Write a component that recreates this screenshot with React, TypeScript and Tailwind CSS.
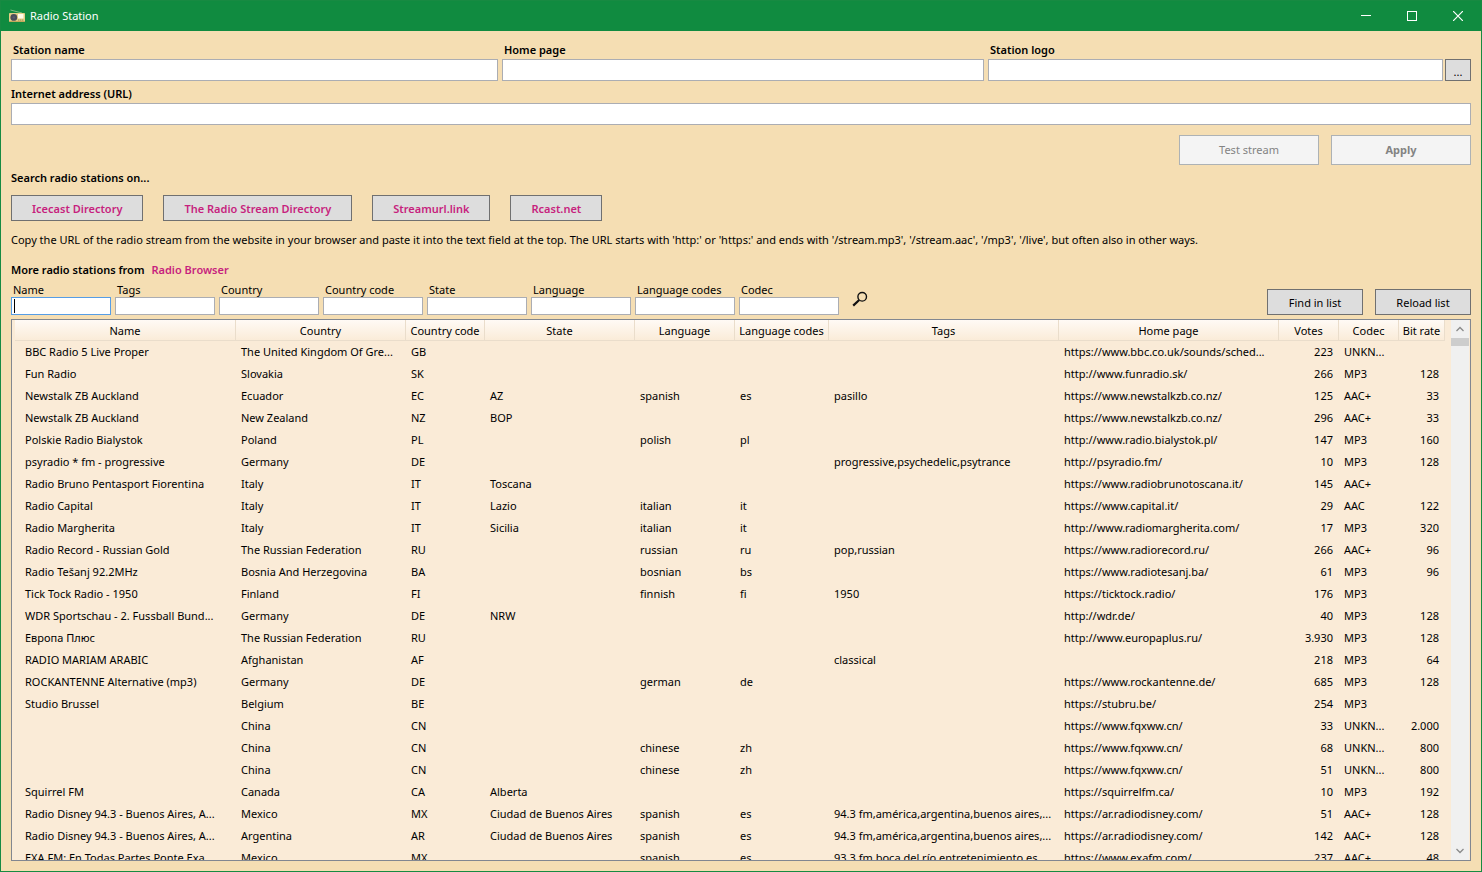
import React from 'react';

type Station = {
  name: string;
  country: string;
  code: string;
  state?: string;
  language?: string;
  langCode?: string;
  tags?: string;
  homePage?: string;
  votes: string;
  codec: string;
  bitRate?: string;
};

const stations: Station[] = [
  { name: 'BBC Radio 5 Live Proper', country: 'The United Kingdom Of Gre...', code: 'GB', homePage: 'https://www.bbc.co.uk/sounds/sched...', votes: '223', codec: 'UNKN...' },
  { name: 'Fun Radio', country: 'Slovakia', code: 'SK', homePage: 'http://www.funradio.sk/', votes: '266', codec: 'MP3', bitRate: '128' },
  { name: 'Newstalk ZB Auckland', country: 'Ecuador', code: 'EC', state: 'AZ', language: 'spanish', langCode: 'es', tags: 'pasillo', homePage: 'https://www.newstalkzb.co.nz/', votes: '125', codec: 'AAC+', bitRate: '33' },
  { name: 'Newstalk ZB Auckland', country: 'New Zealand', code: 'NZ', state: 'BOP', homePage: 'https://www.newstalkzb.co.nz/', votes: '296', codec: 'AAC+', bitRate: '33' },
  { name: 'Polskie Radio Bialystok', country: 'Poland', code: 'PL', language: 'polish', langCode: 'pl', homePage: 'http://www.radio.bialystok.pl/', votes: '147', codec: 'MP3', bitRate: '160' },
  { name: 'psyradio * fm - progressive', country: 'Germany', code: 'DE', tags: 'progressive,psychedelic,psytrance', homePage: 'http://psyradio.fm/', votes: '10', codec: 'MP3', bitRate: '128' },
  { name: 'Radio Bruno Pentasport Fiorentina', country: 'Italy', code: 'IT', state: 'Toscana', homePage: 'https://www.radiobrunotoscana.it/', votes: '145', codec: 'AAC+' },
  { name: 'Radio Capital', country: 'Italy', code: 'IT', state: 'Lazio', language: 'italian', langCode: 'it', homePage: 'https://www.capital.it/', votes: '29', codec: 'AAC', bitRate: '122' },
  { name: 'Radio Margherita', country: 'Italy', code: 'IT', state: 'Sicilia', language: 'italian', langCode: 'it', homePage: 'http://www.radiomargherita.com/', votes: '17', codec: 'MP3', bitRate: '320' },
  { name: 'Radio Record - Russian Gold', country: 'The Russian Federation', code: 'RU', language: 'russian', langCode: 'ru', tags: 'pop,russian', homePage: 'https://www.radiorecord.ru/', votes: '266', codec: 'AAC+', bitRate: '96' },
  { name: 'Radio Tešanj 92.2MHz', country: 'Bosnia And Herzegovina', code: 'BA', language: 'bosnian', langCode: 'bs', homePage: 'https://www.radiotesanj.ba/', votes: '61', codec: 'MP3', bitRate: '96' },
  { name: 'Tick Tock Radio - 1950', country: 'Finland', code: 'FI', language: 'finnish', langCode: 'fi', tags: '1950', homePage: 'https://ticktock.radio/', votes: '176', codec: 'MP3' },
  { name: 'WDR Sportschau - 2. Fussball Bund...', country: 'Germany', code: 'DE', state: 'NRW', homePage: 'http://wdr.de/', votes: '40', codec: 'MP3', bitRate: '128' },
  { name: 'Европа Плюс', country: 'The Russian Federation', code: 'RU', homePage: 'http://www.europaplus.ru/', votes: '3.930', codec: 'MP3', bitRate: '128' },
  { name: 'RADIO MARIAM ARABIC', country: 'Afghanistan', code: 'AF', tags: 'classical', votes: '218', codec: 'MP3', bitRate: '64' },
  { name: 'ROCKANTENNE Alternative (mp3)', country: 'Germany', code: 'DE', language: 'german', langCode: 'de', homePage: 'https://www.rockantenne.de/', votes: '685', codec: 'MP3', bitRate: '128' },
  { name: 'Studio Brussel', country: 'Belgium', code: 'BE', homePage: 'https://stubru.be/', votes: '254', codec: 'MP3' },
  { name: '', country: 'China', code: 'CN', homePage: 'https://www.fqxww.cn/', votes: '33', codec: 'UNKN...', bitRate: '2.000' },
  { name: '', country: 'China', code: 'CN', language: 'chinese', langCode: 'zh', homePage: 'https://www.fqxww.cn/', votes: '68', codec: 'UNKN...', bitRate: '800' },
  { name: '', country: 'China', code: 'CN', language: 'chinese', langCode: 'zh', homePage: 'https://www.fqxww.cn/', votes: '51', codec: 'UNKN...', bitRate: '800' },
  { name: 'Squirrel FM', country: 'Canada', code: 'CA', state: 'Alberta', homePage: 'https://squirrelfm.ca/', votes: '10', codec: 'MP3', bitRate: '192' },
  { name: 'Radio Disney 94.3 - Buenos Aires, A...', country: 'Mexico', code: 'MX', state: 'Ciudad de Buenos Aires', language: 'spanish', langCode: 'es', tags: '94.3 fm,américa,argentina,buenos aires,...', homePage: 'https://ar.radiodisney.com/', votes: '51', codec: 'AAC+', bitRate: '128' },
  { name: 'Radio Disney 94.3 - Buenos Aires, A...', country: 'Argentina', code: 'AR', state: 'Ciudad de Buenos Aires', language: 'spanish', langCode: 'es', tags: '94.3 fm,américa,argentina,buenos aires,...', homePage: 'https://ar.radiodisney.com/', votes: '142', codec: 'AAC+', bitRate: '128' },
  { name: 'EXA FM: En Todas Partes Ponte Exa', country: 'Mexico', code: 'MX', language: 'spanish', langCode: 'es', tags: '93.3 fm,boca del río,entretenimiento,es', homePage: 'https://www.exafm.com/', votes: '237', codec: 'AAC+', bitRate: '48' },
];

const columns: { key: keyof Station; label: string; width: string; cell: string }[] = [
  { key: 'name', label: 'Name', width: 'w-[221px]', cell: 'pl-[10px]' },
  { key: 'country', label: 'Country', width: 'w-[170px]', cell: 'pl-[5px]' },
  { key: 'code', label: 'Country code', width: 'w-[79px]', cell: 'pl-[5px]' },
  { key: 'state', label: 'State', width: 'w-[150px]', cell: 'pl-[5px]' },
  { key: 'language', label: 'Language', width: 'w-[100px]', cell: 'pl-[5px]' },
  { key: 'langCode', label: 'Language codes', width: 'w-[94px]', cell: 'pl-[5px]' },
  { key: 'tags', label: 'Tags', width: 'w-[230px]', cell: 'pl-[5px]' },
  { key: 'homePage', label: 'Home page', width: 'w-[220px]', cell: 'pl-[5px]' },
  { key: 'votes', label: 'Votes', width: 'w-[60px]', cell: 'pr-[6px] text-right' },
  { key: 'codec', label: 'Codec', width: 'w-[60px]', cell: 'pl-[5px]' },
  { key: 'bitRate', label: 'Bit rate', width: 'w-[46px]', cell: 'pr-[6px] text-right' },
];

const directories = ['Icecast Directory', 'The Radio Stream Directory', 'Streamurl.link', 'Rcast.net'];

const filters = ['Name', 'Tags', 'Country', 'Country code', 'State', 'Language', 'Language codes', 'Codec'];

const RadioIcon = () => (
  <svg viewBox="0 0 16 14" className="h-[14px] w-4" aria-hidden>
    <path d="M1.5 1 L13 4" stroke="#8fc08a" strokeWidth="0.9" fill="none" />
    <rect x="0" y="4" width="16" height="9" rx="0.8" fill="#e3cf86" />
    <rect x="0" y="12" width="16" height="1" fill="#c3a95c" />
    <circle cx="4.8" cy="8.4" r="3.4" fill="#4b4d5a" />
    <circle cx="4.8" cy="8.4" r="1.2" fill="#5c5e6c" />
    <rect x="9" y="5" width="5.5" height="4.5" fill="#fffbe8" />
    <circle cx="9.8" cy="11" r="0.6" fill="#7a6a3a" />
    <circle cx="11.8" cy="11" r="0.6" fill="#7a6a3a" />
    <circle cx="13.8" cy="11" r="0.6" fill="#7a6a3a" />
  </svg>
);

const TitleBar = () => (
  <header className="flex h-[30px] shrink-0 items-center bg-[#108b40] pl-2 text-white">
    <RadioIcon />
    <h1 className="ml-[5px] flex-1">Radio Station</h1>
    <button type="button" aria-label="Minimize" className="flex h-full w-[46px] items-center justify-center">
      <svg viewBox="0 0 10 10" className="h-[10px] w-[10px]" aria-hidden>
        <path d="M0 4.5 H10" stroke="currentColor" />
      </svg>
    </button>
    <button type="button" aria-label="Maximize" className="flex h-full w-[46px] items-center justify-center">
      <svg viewBox="0 0 10 10" className="h-[10px] w-[10px]" aria-hidden>
        <rect x="0.5" y="0.5" width="9" height="9" fill="none" stroke="currentColor" />
      </svg>
    </button>
    <button type="button" aria-label="Close" className="flex h-full w-[46px] items-center justify-center">
      <svg viewBox="0 0 10 10" className="h-[10px] w-[10px]" aria-hidden>
        <path d="M0 0 L10 10 M10 0 L0 10" stroke="currentColor" strokeWidth="1.2" />
      </svg>
    </button>
  </header>
);

const textBox = 'h-[22px] w-full min-w-0 border border-[#abadb3] bg-white px-1 outline-none';
const button = 'border border-[#707070] bg-[#dddddd]';

const App: React.FC = () => {
  return (
    <div className="flex h-screen flex-col overflow-hidden border border-[#178a42] bg-[#f5deb3] font-['Noto_Sans','Open_Sans',sans-serif] text-[11px] leading-4 text-black">
      <TitleBar />

      <main className="flex min-h-0 flex-1 flex-col px-[10px] pt-[11px] pb-[10px]">
        <div className="grid grid-cols-[487fr_482fr_483fr] gap-1 font-semibold">
          <div>
            <label htmlFor="station-name" className="mb-px block pl-[2px]">Station name</label>
            <input id="station-name" className={textBox} />
          </div>
          <div>
            <label htmlFor="home-page" className="mb-px block pl-[2px]">Home page</label>
            <input id="home-page" className={textBox} />
          </div>
          <div>
            <label htmlFor="station-logo" className="mb-px block pl-[2px]">Station logo</label>
            <div className="flex gap-[2px]">
              <input id="station-logo" className={textBox} />
              <button type="button" aria-label="Browse" className={`${button} h-[22px] w-[26px] shrink-0 pt-1 font-normal`}>...</button>
            </div>
          </div>
        </div>

        <label htmlFor="stream-url" className="mt-[5px] mb-px font-semibold">Internet address (URL)</label>
        <input id="stream-url" className={`${textBox} shrink-0`} />

        <div className="mt-[10px] flex justify-end gap-3">
          <button type="button" disabled className="h-[30px] w-[140px] border border-[#adb2b5] bg-[#f4f4f4] text-[#838383]">Test stream</button>
          <button type="button" disabled className="h-[30px] w-[140px] border border-[#adb2b5] bg-[#f4f4f4] font-bold text-[#838383]">Apply</button>
        </div>

        <h2 className="mt-[5px] font-semibold">Search radio stations on...</h2>
        <div className="mt-[9px] flex gap-5">
          {directories.map((name) => (
            <button key={name} type="button" className={`${button} h-[26px] px-5 pt-px font-semibold text-[#c71f7e]`}>
              {name}
            </button>
          ))}
        </div>

        <p className="mt-[11px] whitespace-nowrap">
          Copy the URL of the radio stream from the website in your browser and paste it into the text field at the top. The URL starts with 'http:' or 'https:' and ends with '/stream.mp3', '/stream.aac', '/mp3', '/live', but often also in other ways.
        </p>

        <p className="mt-[14px] font-semibold">
          More radio stations from
          <a href="#radio-browser" className="ml-[7px] text-[#c71f7e]">Radio Browser</a>
        </p>

        <div className="mt-1 flex items-end">
          <div className="flex gap-1">
            {filters.map((name, i) => (
              <div key={name} className="relative w-[100px]">
                <label htmlFor={`filter-${i}`} className="block pl-[2px] leading-[15px]">{name}</label>
                <input
                  id={`filter-${i}`}
                  className={`block h-[18px] w-full border bg-white px-1 caret-transparent outline-none ${i === 0 ? 'border-[#569de5]' : 'border-[#abadb3]'}`}
                />
                {i === 0 && <span className="absolute bottom-[2px] left-[3px] h-[14px] w-px bg-black" />}
              </div>
            ))}
          </div>
          <button type="button" aria-label="Search" className="mb-2 ml-[13px]">
            <svg viewBox="0 0 16 16" className="h-4 w-4" fill="none" stroke="#111" aria-hidden>
              <circle cx="10.2" cy="5.8" r="4.3" strokeWidth="1.4" />
              <path d="M7.2 9 L1.2 14.6" strokeWidth="2.2" />
            </svg>
          </button>
          <div className="ml-auto flex gap-3">
            <button type="button" className={`${button} h-[26px] w-24 pt-px`}>Find in list</button>
            <button type="button" className={`${button} h-[26px] w-24 pt-px`}>Reload list</button>
          </div>
        </div>

        <section className="mt-1 flex min-h-0 flex-1 border border-[#828790] bg-[#faebd7]">
          <div className="min-w-0 flex-1 overflow-hidden pl-[3px]">
            <table className="w-[1430px] table-fixed border-separate border-spacing-0">
              <colgroup>
                {columns.map((col) => <col key={col.key} className={col.width} />)}
              </colgroup>
              <thead>
                <tr className="h-[21px] bg-linear-to-b from-[#fffaf5] to-[#faebd7]">
                  {columns.map((col) => (
                    <th key={col.key} className="border-r border-b border-[#eaddcb] p-0 pt-[2px] text-center font-normal whitespace-nowrap">{col.label}</th>
                  ))}
                </tr>
              </thead>
              <tbody>
                {stations.map((s, i) => (
                  <tr key={i} className="h-[22px]">
                    {columns.map((col) => (
                      <td key={col.key} className={`py-0 whitespace-nowrap ${col.cell}`}>{s[col.key]}</td>
                    ))}
                  </tr>
                ))}
              </tbody>
            </table>
          </div>
          <div className="mr-px flex w-[18px] shrink-0 flex-col bg-[#f0f0f0]">
            <button type="button" aria-label="Scroll up" className="flex h-[18px] items-center justify-center">
              <svg viewBox="0 0 8 6" className="h-[6px] w-2" fill="none" stroke="#8a8a8a" strokeWidth="1.3" aria-hidden>
                <path d="M0.5 5 L4 1.5 L7.5 5" />
              </svg>
            </button>
            <div className="h-2 bg-[#cdcdcd]" />
            <button type="button" aria-label="Scroll down" className="mt-auto flex h-[18px] items-center justify-center">
              <svg viewBox="0 0 8 6" className="h-[6px] w-2" fill="none" stroke="#8a8a8a" strokeWidth="1.3" aria-hidden>
                <path d="M0.5 1 L4 4.5 L7.5 1" />
              </svg>
            </button>
          </div>
        </section>
      </main>
    </div>
  );
};

export default App;
